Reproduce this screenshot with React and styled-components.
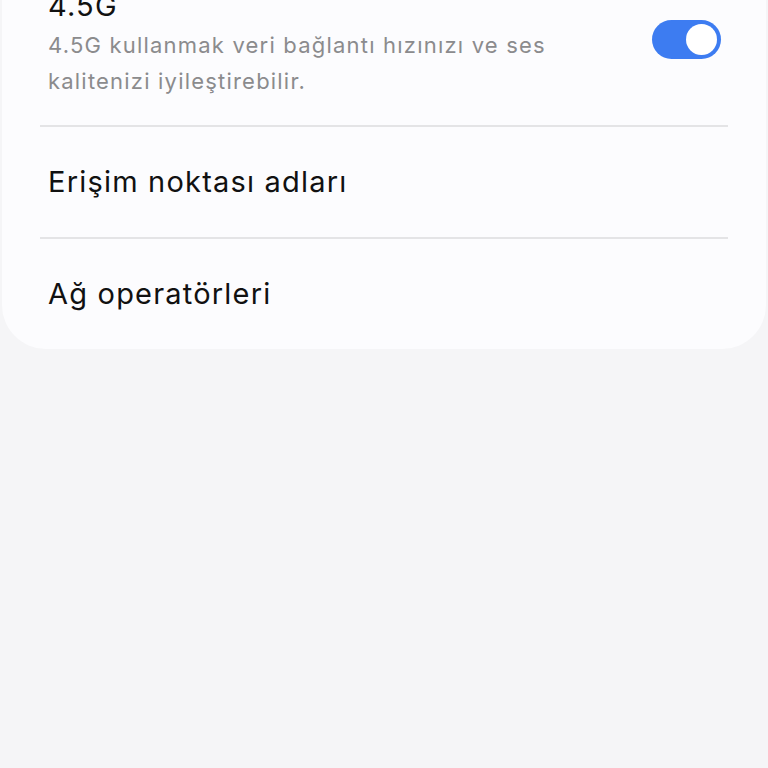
import React from "react";
import styled, { createGlobalStyle } from "styled-components";

const Global = createGlobalStyle`
  html, body {
    margin: 0;
    padding: 0;
    background: #f5f5f7;
    font-family: Inter, "Noto Sans", sans-serif;
  }
`;

const Screen = styled.div`
  width: 768px;
  height: 768px;
  overflow: hidden;
  background: #f5f5f7;
`;

// list is scrolled so the first row's title sits partly above the top edge
const Card = styled.div`
  margin: -27px 2px 0;
  background: #fcfcfe;
  border-radius: 0 0 44px 44px;
  padding: 0 38px;
`;

const Row = styled.div`
  display: flex;
  align-items: center;
  gap: 24px;
  padding: ${(p) => p.$pad || "0 8px"};
  min-height: ${(p) => p.$h || "auto"};
  & + & {
    border-top: 2px solid #e4e4e6;
  }
`;

const Texts = styled.div`
  flex: 1;
  display: flex;
  flex-direction: column;
`;

const Title = styled.div`
  font-size: 29px;
  line-height: 36px;
  color: #111;
  letter-spacing: 1.2px;
`;

const Sub = styled.div`
  margin-top: 3px;
  font-size: 22px;
  line-height: 36px;
  color: #8b8b8d;
  letter-spacing: 1.2px;
`;

const Switch = styled.div`
  width: 69px;
  height: 39px;
  border-radius: 20px;
  background: #3d7cf1;
  position: relative;
  flex-shrink: 0;
  margin-right: -1px;
  margin-top: -8px;
  &::after {
    content: "";
    position: absolute;
    right: 4px;
    top: 4px;
    width: 31px;
    height: 31px;
    border-radius: 50%;
    background: #fff;
  }
`;

export default function App() {
  return (
    <Screen>
      <Global />
      <Card>
        <Row $pad="15px 8px 26px">
          <Texts>
            <Title>4.5G</Title>
            <Sub>
              4.5G kullanmak veri bağlantı hızınızı ve ses
              <br />
              kalitenizi iyileştirebilir.
            </Sub>
          </Texts>
          <Switch />
        </Row>
        <Row $h="110px">
          <Title>Erişim noktası adları</Title>
        </Row>
        <Row $h="110px">
          <Title>Ağ operatörleri</Title>
        </Row>
      </Card>
    </Screen>
  );
}
